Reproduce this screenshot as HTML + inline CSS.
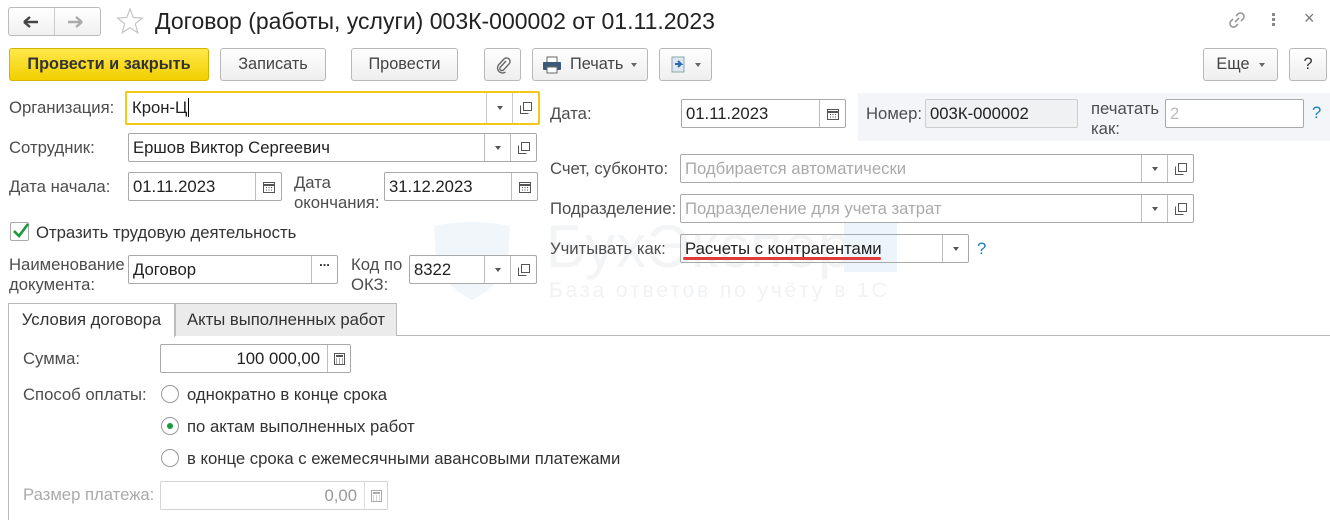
<!DOCTYPE html>
<html><head><meta charset="utf-8"><style>
*{box-sizing:border-box;margin:0;padding:0}
html,body{width:1330px;height:520px;overflow:hidden}
body{background:#fff;font-family:"Liberation Sans",Arial,sans-serif;font-size:16.7px;color:#333;position:relative}
.a{position:absolute}
.lbl{position:absolute;color:#4d4d4d;font-size:16.7px;line-height:18px;white-space:nowrap}
.fld{position:absolute;border:1px solid #a9a9a9;border-radius:2px;background:#fff;height:29px;font-size:16.7px;color:#222;line-height:27px;padding-left:4px;white-space:nowrap;overflow:hidden}
.seg{position:absolute;top:0;bottom:0;border-left:1px solid #bdbdbd;display:flex;align-items:center;justify-content:center;width:26px}
.dd:after{content:"";border-left:3.5px solid transparent;border-right:3.5px solid transparent;border-top:4px solid #555}
.btn{position:absolute;top:48px;height:33px;border:1px solid #b8b8b8;border-radius:3px;background:linear-gradient(#fff,#eee);font-size:16.3px;color:#444;display:flex;align-items:center;justify-content:center;white-space:nowrap}
.radio{position:absolute;width:18px;height:18px;border:1px solid #9a9a9a;border-radius:50%;background:#fff}
.ph{color:#aaa}
</style></head><body>

<!-- watermark -->
<div class="a" style="left:546px;top:212px;font-size:60px;color:#f3f4f6;letter-spacing:1px;line-height:70px">БухЭксперт</div>
<div class="a" style="left:844px;top:220px;width:53px;height:52px;background:#edf4fa"></div>
<div class="a" style="left:549px;top:279px;font-size:21px;color:#f1f2f4;letter-spacing:2.9px">База ответов по учёту в 1С</div>
<svg class="a" style="left:432px;top:222px" width="80" height="80"><path d="M2 4 Q40 -4 78 4 L76 40 Q70 62 40 78 Q10 62 4 40 Z" fill="#f1f6fb"/></svg>

<!-- header -->
<div class="a" style="left:8px;top:7px;width:93px;height:29px;border:1px solid #bbb;border-radius:3px;background:linear-gradient(#fff,#f0f0f0)"></div>
<div class="a" style="left:54px;top:8px;width:1px;height:27px;background:#ccc"></div>
<svg class="a" style="left:22px;top:14px" width="18" height="16"><path d="M2 8H16M2 8L8 3M2 8L8 13" stroke="#444" stroke-width="2.4" fill="none"/></svg>
<svg class="a" style="left:66px;top:14px" width="18" height="16"><path d="M16 8H2M16 8L10 3M16 8L10 13" stroke="#aaa" stroke-width="2.4" fill="none"/></svg>
<svg class="a" style="left:116px;top:7px" width="28" height="28"><path d="M14 2L17.3 10.5 26.5 11 19.3 16.8 21.8 25.8 14 20.7 6.2 25.8 8.7 16.8 1.5 11 10.7 10.5Z" fill="none" stroke="#c4c4c4" stroke-width="1.2"/></svg>
<div class="a" style="left:155px;top:7px;font-size:23px;color:#222;line-height:28px">Договор (работы, услуги) 003К-000002 от 01.11.2023</div>
<svg class="a" style="left:1227px;top:10px" width="20" height="20"><path d="M8 12L12 8M9 6L11 4a3 3 0 0 1 5 5l-2 2M11 14L9 16a3 3 0 0 1-5-5l2-2" stroke="#999" stroke-width="1.6" fill="none"/></svg>
<div class="a" style="left:1272px;top:13px;width:3px;height:3px;background:#888;box-shadow:0 5px 0 #888,0 10px 0 #888"></div>
<div class="a" style="left:1304px;top:8px;font-size:18px;color:#777">×</div>

<!-- toolbar -->
<div class="btn" style="left:9px;width:200px;background:linear-gradient(#ffe84a,#f2cf00);border-color:#d3b400;color:#333;font-weight:bold">Провести и закрыть</div>
<div class="btn" style="left:220px;width:106px">Записать</div>
<div class="btn" style="left:351px;width:107px">Провести</div>
<div class="btn" style="left:484px;width:37px"><svg width="16" height="18"><path d="M11 5L5.5 11a2 2 0 0 0 3 3L14 8a3.5 3.5 0 0 0-5-5L3.5 9a5 5 0 0 0 7 7" stroke="#666" stroke-width="1.4" fill="none"/></svg></div>
<div class="btn" style="left:532px;width:116px;justify-content:flex-start;padding-left:9px"><svg width="20" height="18"><rect x="5" y="1" width="10" height="6" fill="#fff" stroke="#666"/><rect x="1" y="6" width="18" height="8" rx="1" fill="#3d5a7a"/><rect x="5" y="11" width="10" height="6" fill="#fff" stroke="#666"/></svg><span style="margin-left:8px">Печать</span><span style="margin-left:8px;border-left:3px solid transparent;border-right:3px solid transparent;border-top:4px solid #666"></span></div>
<div class="btn" style="left:659px;width:53px;justify-content:flex-start;padding-left:9px"><svg width="20" height="20"><rect x="3" y="2" width="12" height="15" fill="#dfe8f2" stroke="#8aa"/><path d="M6 9h6l-3-3M12 9l-3 3" stroke="#2a6cb0" stroke-width="2" fill="none"/></svg><span style="margin-left:6px;border-left:3px solid transparent;border-right:3px solid transparent;border-top:4px solid #666"></span></div>
<div class="btn" style="left:1203px;width:75px">Еще<span style="margin-left:9px;border-left:3px solid transparent;border-right:3px solid transparent;border-top:4px solid #666"></span></div>
<div class="btn" style="left:1289px;width:38px;color:#333">?</div>

<!-- left form -->
<div class="lbl" style="left:9px;top:99px">Организация:</div>
<div class="fld" style="left:125px;top:91px;width:415px;height:34px;border:2px solid #f3c817;line-height:30px;padding-left:5px">Крон-Ц<span style="border-left:1px solid #000;margin-left:1px"></span>
<div class="seg dd" style="right:26px;border-color:#ccc"></div><div class="seg" style="right:0;border-color:#ccc"><svg width="12" height="12"><path d="M3.5 0.5h8v8h-8zM0.5 3.5v8h8" fill="none" stroke="#555"/></svg></div></div>

<div class="lbl" style="left:9px;top:139px">Сотрудник:</div>
<div class="fld" style="left:128px;top:133px;width:409px">Ершов Виктор Сергеевич
<div class="seg dd" style="right:26px"></div><div class="seg" style="right:0"><svg width="12" height="12"><path d="M3.5 0.5h8v8h-8zM0.5 3.5v8h8" fill="none" stroke="#555"/></svg></div></div>

<div class="lbl" style="left:9px;top:178px">Дата начала:</div>
<div class="fld" style="left:128px;top:172px;width:154px">01.11.2023<div class="seg" style="right:0"><svg width="12" height="12"><rect x="0.5" y="1.5" width="11" height="10" fill="none" stroke="#555"/><path d="M1 4h10" stroke="#555" stroke-width="2"/><path d="M3 6.5h1M5.5 6.5h1M8 6.5h1M3 9h1M5.5 9h1M8 9h1" stroke="#555"/></svg></div></div>
<div class="lbl" style="left:294px;top:173px;line-height:20px">Дата<br>окончания:</div>
<div class="fld" style="left:384px;top:172px;width:154px">31.12.2023<div class="seg" style="right:0"><svg width="12" height="12"><rect x="0.5" y="1.5" width="11" height="10" fill="none" stroke="#555"/><path d="M1 4h10" stroke="#555" stroke-width="2"/><path d="M3 6.5h1M5.5 6.5h1M8 6.5h1M3 9h1M5.5 9h1M8 9h1" stroke="#555"/></svg></div></div>

<div class="a" style="left:10px;top:222px;width:19px;height:19px;border:1px solid #aaa;border-radius:2px;background:#fff"></div>
<svg class="a" style="left:11px;top:221px" width="20" height="20"><path d="M3 10L8 15 17 3" stroke="#1a9a3a" stroke-width="2.6" fill="none"/></svg>
<div class="lbl" style="left:36px;top:224px;color:#333">Отразить трудовую деятельность</div>

<div class="lbl" style="left:9px;top:255px;line-height:20px">Наименование<br>документа:</div>
<div class="fld" style="left:128px;top:255px;width:210px">Договор<div class="seg" style="right:0;font-size:13px;color:#333;font-weight:bold;align-items:flex-end;padding-bottom:8px">...</div></div>
<div class="lbl" style="left:351px;top:255px;line-height:20px">Код по<br>ОКЗ:</div>
<div class="fld" style="left:409px;top:255px;width:128px">8322<div class="seg dd" style="right:26px"></div><div class="seg" style="right:0"><svg width="12" height="12"><path d="M3.5 0.5h8v8h-8zM0.5 3.5v8h8" fill="none" stroke="#555"/></svg></div></div>

<!-- tabs -->
<div class="a" style="left:8px;top:335px;width:1330px;height:200px;border:1px solid #bbb"></div>
<div class="a" style="left:175px;top:303px;width:222px;height:33px;background:#ebebeb;border:1px solid #bbb;border-bottom:none;text-align:center;line-height:32px;color:#333">Акты выполненных работ</div>
<div class="a" style="left:8px;top:303px;width:167px;height:34px;background:#fff;border:1px solid #bbb;border-bottom:none;text-align:center;line-height:32px;color:#333">Условия договора</div>

<div class="lbl" style="left:23px;top:350px">Сумма:</div>
<div class="fld" style="left:160px;top:344px;width:191px;padding-right:30px;text-align:right">100 000,00<div class="seg" style="right:0;width:23px"><svg width="11" height="12"><rect x="0.5" y="0.5" width="10" height="11" fill="none" stroke="#555"/><rect x="2" y="2" width="7" height="2" fill="#555"/><path d="M2 6h1M5 6h1M8 6h1M2 8h1M5 8h1M8 8h1M2 10h1M5 10h1M8 10h1" stroke="#555"/></svg></div></div>

<div class="lbl" style="left:23px;top:386px">Способ оплаты:</div>
<div class="radio" style="left:161px;top:385px"></div>
<div class="lbl" style="left:187px;top:386px;color:#333">однократно в конце срока</div>
<div class="radio" style="left:161px;top:417px"><div style="position:absolute;left:5px;top:5px;width:6px;height:6px;border-radius:50%;background:#1a9a3a"></div></div>
<div class="lbl" style="left:187px;top:418px;color:#333">по актам выполненных работ</div>
<div class="radio" style="left:161px;top:449px"></div>
<div class="lbl" style="left:187px;top:450px;color:#333">в конце срока с ежемесячными авансовыми платежами</div>

<div class="lbl" style="left:23px;top:486px;color:#aaa">Размер платежа:</div>
<div class="fld" style="left:160px;top:481px;width:228px;border-color:#d5d5d5;color:#999;padding-right:30px;text-align:right">0,00<div class="seg" style="right:0;width:23px;border-color:#ddd"><svg width="11" height="12"><rect x="0.5" y="0.5" width="10" height="11" fill="none" stroke="#aaa"/><rect x="2" y="2" width="7" height="2" fill="#aaa"/><path d="M2 6h1M5 6h1M8 6h1M2 8h1M5 8h1M8 8h1M2 10h1M5 10h1M8 10h1" stroke="#aaa"/></svg></div></div>

<!-- right form -->
<div class="lbl" style="left:550px;top:105px">Дата:</div>
<div class="fld" style="left:681px;top:99px;width:165px">01.11.2023<div class="seg" style="right:0"><svg width="12" height="12"><rect x="0.5" y="1.5" width="11" height="10" fill="none" stroke="#555"/><path d="M1 4h10" stroke="#555" stroke-width="2"/><path d="M3 6.5h1M5.5 6.5h1M8 6.5h1M3 9h1M5.5 9h1M8 9h1" stroke="#555"/></svg></div></div>
<div class="a" style="left:858px;top:93px;width:472px;height:48px;background:#f3f5f9"></div>
<div class="lbl" style="left:866px;top:105px">Номер:</div>
<div class="fld" style="left:925px;top:99px;width:153px;background:#f0f1f3;border-color:#ccc">003К-000002</div>
<div class="lbl" style="left:1091px;top:99px;line-height:20px">печатать<br>как:</div>
<div class="fld" style="left:1165px;top:99px;width:139px;color:#bbb">2</div>
<div class="lbl" style="left:1312px;top:104px;color:#1a7fc1">?</div>

<div class="lbl" style="left:550px;top:160px">Счет, субконто:</div>
<div class="fld ph" style="left:680px;top:154px;width:514px">Подбирается автоматически<div class="seg dd" style="right:26px"></div><div class="seg" style="right:0"><svg width="12" height="12"><path d="M3.5 0.5h8v8h-8zM0.5 3.5v8h8" fill="none" stroke="#555"/></svg></div></div>

<div class="lbl" style="left:550px;top:200px">Подразделение:</div>
<div class="fld ph" style="left:680px;top:194px;width:514px">Подразделение для учета затрат<div class="seg dd" style="right:26px"></div><div class="seg" style="right:0"><svg width="12" height="12"><path d="M3.5 0.5h8v8h-8zM0.5 3.5v8h8" fill="none" stroke="#555"/></svg></div></div>

<div class="lbl" style="left:550px;top:240px">Учитывать как:</div>
<div class="fld" style="left:680px;top:234px;width:289px;background:transparent">Расчеты с контрагентами<div class="seg dd" style="right:0"></div></div>
<div class="a" style="left:683px;top:257px;width:198px;height:3px;border-radius:2px;background:#e03a3a"></div>
<div class="lbl" style="left:977px;top:240px;color:#1a7fc1">?</div>

</body></html>
